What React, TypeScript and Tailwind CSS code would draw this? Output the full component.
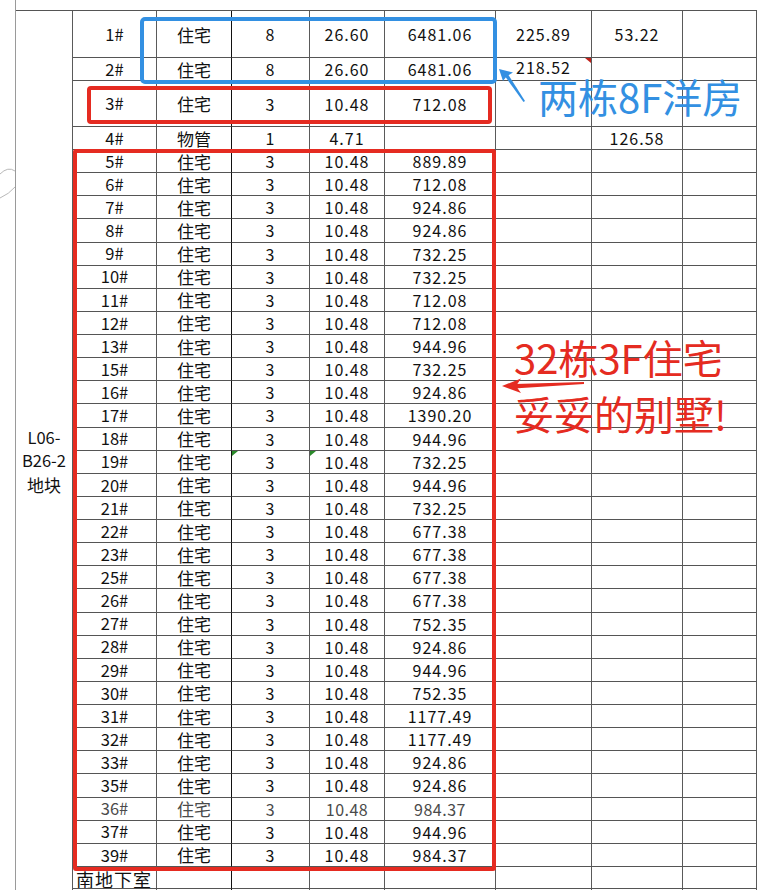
import React from "react";

type Row = string[];

const top: Row[] = [
  ["1#", "住宅", "8", "26.60", "6481.06", "225.89", "53.22", ""],
  ["2#", "住宅", "8", "26.60", "6481.06", "218.52", "", ""],
  ["3#", "住宅", "3", "10.48", "712.08", "", "", ""],
  ["4#", "物管", "1", "4.71", "", "", "126.58", ""],
];

const villas: [string, string][] = [
  ["5#", "889.89"], ["6#", "712.08"], ["7#", "924.86"], ["8#", "924.86"],
  ["9#", "732.25"], ["10#", "732.25"], ["11#", "712.08"], ["12#", "712.08"],
  ["13#", "944.96"], ["15#", "732.25"], ["16#", "924.86"], ["17#", "1390.20"],
  ["18#", "944.96"], ["19#", "732.25"], ["20#", "944.96"], ["21#", "732.25"],
  ["22#", "677.38"], ["23#", "677.38"], ["25#", "677.38"], ["26#", "677.38"],
  ["27#", "752.35"], ["28#", "924.86"], ["29#", "944.96"], ["30#", "752.35"],
  ["31#", "1177.49"], ["32#", "1177.49"], ["33#", "924.86"], ["35#", "924.86"],
  ["36#", "984.37"], ["37#", "944.96"], ["39#", "984.37"],
];

const rows: Row[] = [
  ...top,
  ...villas.map(([n, a]) => [n, "住宅", "3", "10.48", a, "", "", ""]),
  ["南地下室", "", "", "", "", "", "", ""],
  ["", "", "", "", "", "", "", ""],
];

function Cell({ text, col, row }: { text: string; col: number; row: number }) {
  const light = text !== "" && rows[row][0] === "36#";
  const isBasement = text === "南地下室";
  const size =
    col === 1
      ? "text-[17px]"
      : col === 0
      ? isBasement
        ? "text-[18px] tracking-[1px]"
        : "text-[16.5px]"
      : light
      ? "text-[16px] tracking-[0.5px]"
      : "text-[16px] tracking-[1px]";
  const align = isBasement ? "items-start justify-start pl-[3px] pt-[3px]" : "items-center justify-center";
  const rightBorder = col === 1 ? "border-r-[#111]" : "border-r-[#5a5a5a]";
  const color = light ? "text-[#4a4a4a]" : "text-[#111]";
  const raise = row === 1 && col === 5 ? "pb-[5px]" : "";
  return (
    <div
      className={`relative flex overflow-hidden whitespace-nowrap border-r border-b border-b-[#555] leading-none ${rightBorder} ${align} ${size} ${color} ${raise}`}
    >
      {text}
      {row === 1 && col === 5 && (
        <span className="absolute right-0 top-0 h-0 w-0 border-l-[6px] border-t-[5px] border-l-transparent border-t-[#c0201a]" />
      )}
      {row === 17 && (col === 2 || col === 3) && (
        <span className="absolute left-0 top-0 h-0 w-0 border-r-[6px] border-t-[5px] border-r-transparent border-t-[#2a8a2a]" />
      )}
    </div>
  );
}

export default function App() {
  return (
    <div className="relative h-[890px] w-[757px] overflow-hidden bg-white font-['Noto_Sans_CJK_SC','Noto_Sans',sans-serif]">
      <div className="ml-[15px] h-[960px] border-l border-l-[#9a9a9a] pt-[10px]">
        <div className="grid grid-cols-[57px_84px_75px_78px_75px_111px_96px_91px_74px] grid-rows-[47px_23px_46px_23px_repeat(31,23.13px)_22px_23px] border-t border-t-[#555]">
          <div className="col-start-1 row-span-37 flex flex-col items-center justify-center border-r border-b border-[#5a5a5a] text-[16.5px] leading-[23.5px] text-[#111]">
            <span>L06-</span>
            <span>B26-2</span>
            <span className="text-[17px]">地块</span>
          </div>
          {rows.map((r, ri) =>
            r.map((t, ci) => <Cell key={`${ri}-${ci}`} text={t} col={ci} row={ri} />)
          )}
        </div>
      </div>

      {/* annotation boxes */}
      <div className="absolute left-[140px] top-[17px] h-[67px] w-[357px] rounded-[5px] border-[4px] border-[#3390e2]" />
      <div className="absolute left-[87px] top-[86px] h-[38px] w-[405px] rounded-[4px] border-[4px] border-[#e52b21]" />
      <div className="absolute left-[73px] top-[149px] h-[722px] w-[423px] rounded-[3px] border-[4px] border-[#e52b21]" />

      {/* annotation texts */}
      <div className="absolute left-[538px] top-[76px] whitespace-nowrap text-[40px] leading-[40px] text-[#3390e2]">
        两栋8F洋房
      </div>
      <div className="absolute left-[514px] top-[329px] flex flex-col whitespace-nowrap text-[40px] leading-[56px] text-[#e52b21]">
        <span>32栋3F住宅</span>
        <span>妥妥的别墅!</span>
      </div>

      {/* arrows and marks */}
      <svg className="pointer-events-none absolute left-0 top-0" width="757" height="890" viewBox="0 0 757 890">
        <path d="M499 69 L513 72.5 L506.5 76.5 L503 81 Z" fill="#3390e2" />
        <path d="M504.5 75.5 L507.5 73.5 L525 101 L523.5 102 Z" fill="#3390e2" />
        <path d="M502 386 L521 378.5 L516 386 L521 393 Z" fill="#e52b21" />
        <path d="M514 384 L584 382 L584 384 L514 388.5 Z" fill="#e52b21" />
        <path d="M0 174 Q 8 166 15 171" stroke="#b8b8b8" strokeWidth="1" fill="none" />
        <path d="M0 198 Q 9 194 15 187" stroke="#b8b8b8" strokeWidth="1" fill="none" />
      </svg>
    </div>
  );
}
